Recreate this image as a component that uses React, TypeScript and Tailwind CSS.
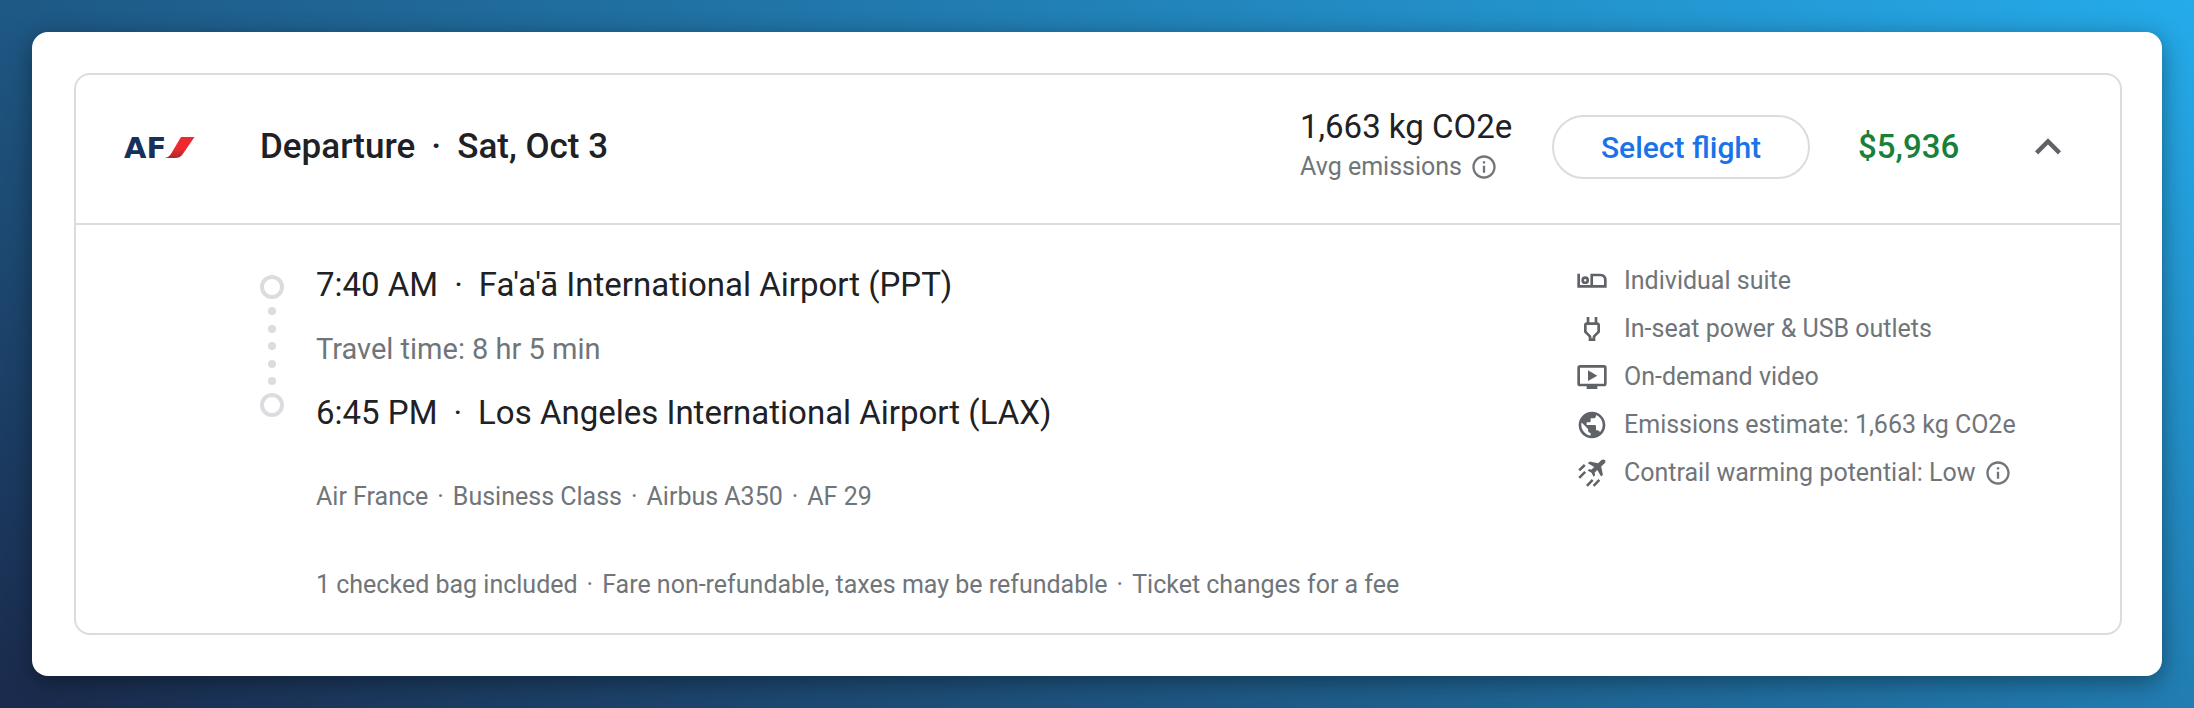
import React, { useState } from 'react'
import { MdExpandLess, MdInfoOutline, MdOndemandVideo, MdOutlinePower, MdPublic } from 'react-icons/md'

function AirFranceLogo() {
  return (
    <svg viewBox="0 0 72 40" className="h-10 w-18" role="img" aria-label="Air France">
      <defs>
        <linearGradient id="af-stripe" x1="0" y1="0" x2="0" y2="1">
          <stop offset="0.55" stopColor="#ee2a2f" />
          <stop offset="1" stopColor="#a9282c" />
        </linearGradient>
      </defs>
      <text x="0" y="31" fontSize="29" fontWeight="700" fontFamily="DejaVu Sans, sans-serif" fill="#17315a">
        AF
      </text>
      <path d="M57 10H70.500L58.500 27.500Q56 31 51 31H41Q45.500 30 47.500 26Z" fill="url(#af-stripe)" />
    </svg>
  )
}

function SuiteIcon() {
  return (
    <svg viewBox="0 0 24 24" className="size-8" fill="none" stroke="currentColor" strokeWidth="2" aria-hidden="true">
      <path d="M2 6.500V16H22V11.500Q22 7.500 18.300 7.500H11.800V16" />
      <circle cx="6.900" cy="11.400" r="1.900" />
    </svg>
  )
}

function ContrailIcon() {
  return (
    <svg viewBox="0 0 24 24" className="size-8" fill="currentColor" aria-hidden="true">
      <path d="M21.600 2.300C20.900 1.600 19.600 1.700 18.900 2.400L16.600 4.600L10.200 3.300L8.900 4.700L13.600 7.500L11.800 9.400L9.800 9.100L8.700 10.200L11.600 11.800L13.200 14.800L14.300 13.700L14 11.700L16 9.800L18.800 14.700L20.200 13.300L18.900 7.100L21.500 4.700C22.200 4 22.300 3 21.600 2.300Z" />
      <g fill="none" stroke="currentColor" strokeWidth="1.900">
        <path d="M2.400 10.100L6.600 6M2.400 15.600L6.900 11.200M8.200 21.600L12.500 17.200M13.200 21.600L17.500 17.200" />
      </g>
    </svg>
  )
}

function Dot() {
  return <span className="mx-4">·</span>
}

function SmallDot() {
  return <span className="mx-[9px]">·</span>
}

function App() {
  const [open, setOpen] = useState(true)

  return (
    <main className="min-h-screen bg-[linear-gradient(30deg,#1a2a4c,#25abea)] p-8 font-[Roboto,sans-serif] text-[#202124]">
      <section className="rounded-2xl bg-white py-[41px] pl-[42px] pr-10 shadow-[0_6px_24px_rgba(0,0,0,0.4)]">
        <div className="rounded-2xl border-2 border-[#dadce0]">
          <header className="flex h-[148px] items-center pb-1 pl-12 pr-[46px]">
            <div className="w-[136px]">
              <AirFranceLogo />
            </div>
            <h2 className="flex-1 text-[35px] font-medium leading-10">
              Departure<Dot />Sat, Oct 3
            </h2>
            <div className="w-[252px]">
              <p className="text-[33px] leading-10">1,663 kg CO2e</p>
              <p className="flex items-center gap-2 text-[25px] leading-10 text-[#70757a]">
                Avg emissions
                <MdInfoOutline className="size-7" />
              </p>
            </div>
            <button
              type="button"
              className="h-16 w-[258px] rounded-full border-2 border-[#dadce0] text-[30px] font-medium text-[#1a73e8]"
            >
              Select flight
            </button>
            <p className="ml-12 w-[164px] text-[33px] font-medium leading-10 text-[#188038]">$5,936</p>
            <button
              type="button"
              aria-label="Flight details"
              aria-expanded={open}
              onClick={() => setOpen(!open)}
              className="text-[#5f6368]"
            >
              <MdExpandLess className={open ? 'size-[52px]' : 'size-[52px] rotate-180'} />
            </button>
          </header>

          {open && (
            <div className="flex justify-between border-t-2 border-[#dadce0] pb-7 pl-[184px]">
              <div className="pt-10">
                <div className="flex gap-8">
                  <div className="mt-[10px] flex h-[142px] flex-col items-center" aria-hidden="true">
                    <span className="size-6 rounded-full border-4 border-[#dadce0]" />
                    <div className="flex flex-1 flex-col justify-between py-2">
                      <span className="size-2 rounded-full bg-[#dadce0]" />
                      <span className="size-2 rounded-full bg-[#dadce0]" />
                      <span className="size-2 rounded-full bg-[#dadce0]" />
                      <span className="size-2 rounded-full bg-[#dadce0]" />
                      <span className="size-2 rounded-full bg-[#dadce0]" />
                    </div>
                    <span className="size-6 rounded-full border-4 border-[#dadce0]" />
                  </div>
                  <div>
                    <p className="text-[33px] leading-10">
                      7:40 AM<Dot />Fa'a'ā International Airport (PPT)
                    </p>
                    <p className="py-6 text-[29px] leading-10 text-[#70757a]">Travel time: 8 hr 5 min</p>
                    <p className="text-[33px] leading-10">
                      6:45 PM<Dot />Los Angeles International Airport (LAX)
                    </p>
                  </div>
                </div>
                <div className="pl-14 text-[25px] leading-10 text-[#70757a]">
                  <p className="mt-11">
                    Air France<SmallDot />Business Class<SmallDot />Airbus A350<SmallDot />AF 29
                  </p>
                  <p className="mt-12">
                    1 checked bag included<SmallDot />Fare non-refundable, taxes may be refundable<SmallDot />Ticket
                    changes for a fee
                  </p>
                </div>
              </div>

              <ul className="w-[544px] pt-8 text-[25px] leading-[48px] text-[#70757a] [&_svg]:shrink-0">
                <li className="flex items-center gap-4">
                  <span className="text-[#5f6368]"><SuiteIcon /></span>
                  Individual suite
                </li>
                <li className="flex items-center gap-4">
                  <MdOutlinePower className="size-8 text-[#5f6368]" />
                  In-seat power & USB outlets
                </li>
                <li className="flex items-center gap-4">
                  <MdOndemandVideo className="size-8 text-[#5f6368]" />
                  On-demand video
                </li>
                <li className="flex items-center gap-4">
                  <MdPublic className="size-8 text-[#5f6368]" />
                  Emissions estimate: 1,663 kg CO2e
                </li>
                <li className="flex items-center gap-4">
                  <span className="text-[#5f6368]"><ContrailIcon /></span>
                  <span className="flex items-center gap-2">
                    Contrail warming potential: Low
                    <MdInfoOutline className="size-7" />
                  </span>
                </li>
              </ul>
            </div>
          )}
        </div>
      </section>
    </main>
  )
}

export default App
